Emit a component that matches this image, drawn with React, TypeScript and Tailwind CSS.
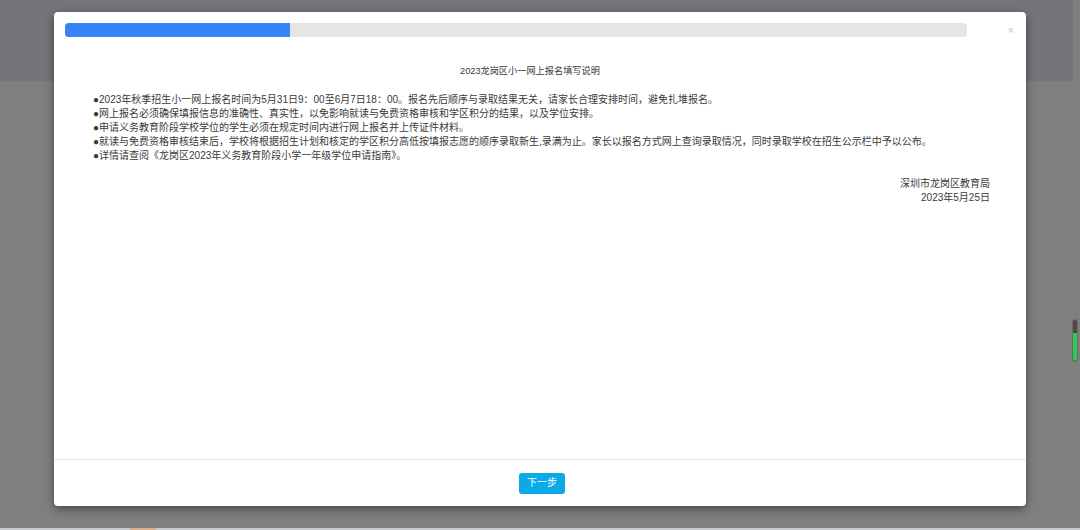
const notes = [
  '2023年秋季招生小一网上报名时间为5月31日9：00至6月7日18：00。报名先后顺序与录取结果无关，请家长合理安排时间，避免扎堆报名。',
  '网上报名必须确保填报信息的准确性、真实性，以免影响就读与免费资格审核和学区积分的结果，以及学位安排。',
  '申请义务教育阶段学校学位的学生必须在规定时间内进行网上报名并上传证件材料。',
  '就读与免费资格审核结束后，学校将根据招生计划和核定的学区积分高低按填报志愿的顺序录取新生,录满为止。家长以报名方式网上查询录取情况，同时录取学校在招生公示栏中予以公布。',
  '详情请查阅《龙岗区2023年义务教育阶段小学一年级学位申请指南》。',
]

export default function App() {
  return (
    <div
      className="relative w-[1080px] h-[530px] overflow-hidden bg-[#7f7f7f]"
      style={{ fontFamily: '"Liberation Sans", "Noto Sans CJK SC", sans-serif' }}
    >
      {/* page behind the overlay */}
      <div className="absolute top-0 left-0 w-[1073px] h-[81px] bg-[#737578]" />
      <div className="absolute left-0 bottom-0 w-full h-[2px] bg-[#c6c9cd]">
        <div className="absolute left-[130px] top-0 w-[26px] h-[2px] bg-[#d9b08e]" />
      </div>
      {/* scroll thumb */}
      <div className="absolute left-[1072px] top-[319px] w-[6px] h-[43px] rounded-full bg-[#4a4a4a] border border-[#6a6a6a] overflow-hidden flex flex-col">
        <div className="h-[13px]" />
        <div className="flex-1 bg-[#2ecc55] rounded-b-full" />
      </div>

      <div className="relative pt-[12px] pl-[54px]">
        <div className="w-[972px] h-[494px] bg-white rounded-[4px] shadow-[0_3px_10px_rgba(0,0,0,0.45)] flex flex-col">
          <div className="flex items-center pt-[11px] pl-[11px]">
            <div className="w-[902px] h-[14px] rounded-[4px] bg-[#e5e5e5] flex">
              <div className="w-[225px] h-full rounded-l-[4px] bg-[#3884f7]" />
            </div>
            <div className="flex-1 flex justify-end pr-[12px] text-[11px] leading-none text-[#c4c4c4]">×</div>
          </div>

          <div className="flex-1 pl-[39px] pr-[36px] text-[#3a3a3a]">
            <p className="mt-[27px] pr-[23px] text-center text-[9.2px] leading-[14px]">
              2023龙岗区小一网上报名填写说明
            </p>
            <div className="mt-[15px] text-[10px] leading-[14px]">
              {notes.map((n) => (
                <p key={n} className="whitespace-nowrap">
                  <span className="text-[10px]">●</span>
                  {n}
                </p>
              ))}
            </div>
            <div className="mt-[14px] text-right text-[10px] leading-[14px]">
              <p>深圳市龙岗区教育局</p>
              <p>2023年5月25日</p>
            </div>
          </div>

          <div className="h-[47px] border-t border-[#e8e8e8] flex items-center justify-center">
            <button className="ml-[4px] w-[46px] h-[21px] rounded-[3px] bg-[#0aa9e8] text-white text-[10px] leading-none">
              下一步
            </button>
          </div>
        </div>
      </div>
    </div>
  )
}
